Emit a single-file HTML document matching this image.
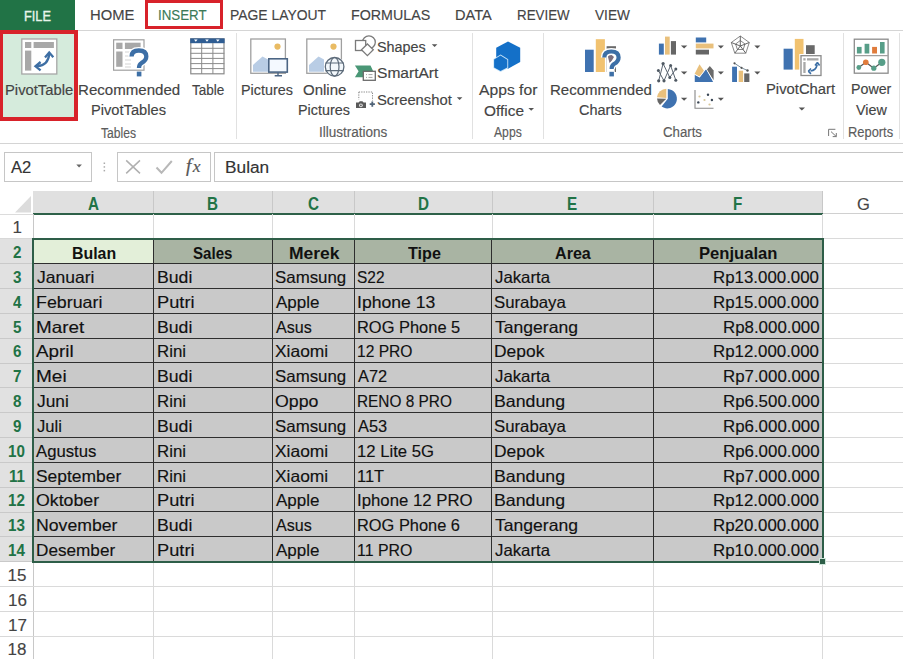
<!DOCTYPE html>
<html><head><meta charset="utf-8"><style>
html,body{margin:0;padding:0;}
body{width:903px;height:659px;overflow:hidden;position:relative;background:#fff;font-family:"Liberation Sans", sans-serif;}
.t{position:absolute;white-space:nowrap;transform-origin:0 0;-webkit-text-stroke:0.15px currentColor;}
.b{-webkit-text-stroke:0;}
.r{position:absolute;box-sizing:content-box;}
</style></head><body>
<div class="r" style="left:0.00px;top:0.00px;width:75.00px;height:30.00px;background:#217346;"></div>
<div class="t" style="left:24.08px;top:7.50px;font-size:15.5px;line-height:15.5px;color:#e8f5ec;font-weight:normal;transform:scaleX(0.8226);-webkit-text-stroke:0.35px #e8f5ec">FILE</div>
<div class="r" style="left:75.00px;top:29.50px;width:828.00px;height:1.00px;background:#d5d5d5;"></div>
<div class="t" style="left:89.61px;top:7.30px;font-size:15px;line-height:15px;color:#444;font-weight:normal;transform:scaleX(0.9864);">HOME</div>
<div class="t" style="left:157.91px;top:7.30px;font-size:15px;line-height:15px;color:#3b7a57;font-weight:normal;transform:scaleX(0.8870);">INSERT</div>
<div class="t" style="left:229.77px;top:7.30px;font-size:15px;line-height:15px;color:#444;font-weight:normal;transform:scaleX(0.9272);">PAGE LAYOUT</div>
<div class="t" style="left:350.65px;top:7.30px;font-size:15px;line-height:15px;color:#444;font-weight:normal;transform:scaleX(0.9500);">FORMULAS</div>
<div class="t" style="left:455.03px;top:7.30px;font-size:15px;line-height:15px;color:#444;font-weight:normal;transform:scaleX(0.9730);">DATA</div>
<div class="t" style="left:517.11px;top:7.30px;font-size:15px;line-height:15px;color:#444;font-weight:normal;transform:scaleX(0.8897);">REVIEW</div>
<div class="t" style="left:595.00px;top:7.30px;font-size:15px;line-height:15px;color:#444;font-weight:normal;transform:scaleX(0.9103);">VIEW</div>
<div class="r" style="left:0.00px;top:142.50px;width:903.00px;height:1.20px;background:#d4d4d4;"></div>
<div class="r" style="left:236.00px;top:33.00px;width:1.00px;height:106.00px;background:#e1e1e1;"></div>
<div class="r" style="left:472.00px;top:33.00px;width:1.00px;height:106.00px;background:#e1e1e1;"></div>
<div class="r" style="left:543.00px;top:33.00px;width:1.00px;height:106.00px;background:#e1e1e1;"></div>
<div class="r" style="left:843.00px;top:33.00px;width:1.00px;height:106.00px;background:#e1e1e1;"></div>
<div class="r" style="left:899.00px;top:33.00px;width:1.00px;height:106.00px;background:#e1e1e1;"></div>
<div class="r" style="left:0.00px;top:30.00px;width:77.00px;height:90.50px;background:#d5ebdc;"></div>
<div class="t" style="left:4.94px;top:82.70px;font-size:14px;line-height:14px;color:#444;font-weight:normal;transform:scaleX(1.0556);">PivotTable</div>
<div class="t" style="left:77.82px;top:82.80px;font-size:14px;line-height:14px;color:#444;font-weight:normal;transform:scaleX(1.0763);">Recommended</div>
<div class="t" style="left:91.25px;top:102.90px;font-size:14px;line-height:14px;color:#444;font-weight:normal;transform:scaleX(1.0471);">PivotTables</div>
<div class="t" style="left:192.00px;top:82.50px;font-size:14px;line-height:14px;color:#444;font-weight:normal;transform:scaleX(0.9667);">Table</div>
<div class="t" style="left:100.60px;top:126.00px;font-size:14px;line-height:14px;color:#5c5c5c;font-weight:normal;transform:scaleX(0.8675);">Tables</div>
<div class="t" style="left:241.27px;top:82.50px;font-size:14px;line-height:14px;color:#444;font-weight:normal;transform:scaleX(1.0265);">Pictures</div>
<div class="t" style="left:302.60px;top:82.50px;font-size:14px;line-height:14px;color:#444;font-weight:normal;transform:scaleX(1.0725);">Online</div>
<div class="t" style="left:297.98px;top:103.20px;font-size:14px;line-height:14px;color:#444;font-weight:normal;transform:scaleX(1.0245);">Pictures</div>
<div class="t" style="left:319.03px;top:125.10px;font-size:14px;line-height:14px;color:#5c5c5c;font-weight:normal;transform:scaleX(0.9657);">Illustrations</div>
<div class="t" style="left:377.37px;top:40.40px;font-size:14px;line-height:14px;color:#444;font-weight:normal;transform:scaleX(1.0261);">Shapes</div>
<div class="t" style="left:377.29px;top:66.40px;font-size:14px;line-height:14px;color:#444;font-weight:normal;transform:scaleX(1.1111);">SmartArt</div>
<div class="t" style="left:377.34px;top:93.10px;font-size:14px;line-height:14px;color:#444;font-weight:normal;transform:scaleX(1.0557);">Screenshot</div>
<div class="t" style="left:479.00px;top:83.40px;font-size:14px;line-height:14px;color:#444;font-weight:normal;transform:scaleX(1.1192);">Apps for</div>
<div class="t" style="left:483.70px;top:103.60px;font-size:14px;line-height:14px;color:#444;font-weight:normal;transform:scaleX(1.1000);">Office</div>
<div class="t" style="left:494.20px;top:125.40px;font-size:14px;line-height:14px;color:#5c5c5c;font-weight:normal;transform:scaleX(0.8688);">Apps</div>
<div class="t" style="left:549.93px;top:83.40px;font-size:14px;line-height:14px;color:#444;font-weight:normal;transform:scaleX(1.0731);">Recommended</div>
<div class="t" style="left:579.17px;top:102.90px;font-size:14px;line-height:14px;color:#444;font-weight:normal;transform:scaleX(1.0350);">Charts</div>
<div class="t" style="left:663.25px;top:124.80px;font-size:14px;line-height:14px;color:#5c5c5c;font-weight:normal;transform:scaleX(0.9450);">Charts</div>
<div class="t" style="left:765.94px;top:82.30px;font-size:14px;line-height:14px;color:#444;font-weight:normal;transform:scaleX(1.0569);">PivotChart</div>
<div class="t" style="left:850.98px;top:82.30px;font-size:14px;line-height:14px;color:#444;font-weight:normal;transform:scaleX(1.0154);">Power</div>
<div class="t" style="left:855.50px;top:102.70px;font-size:14px;line-height:14px;color:#444;font-weight:normal;transform:scaleX(1.0233);">View</div>
<div class="t" style="left:848.28px;top:124.70px;font-size:14px;line-height:14px;color:#5c5c5c;font-weight:normal;transform:scaleX(0.9208);">Reports</div>
<div class="r" style="left:-1px;top:29.8px;width:70.6px;height:82.8px;border:4px solid #d8222a;"></div>
<div class="r" style="left:145.3px;top:-0.3px;width:71.6px;height:23.5px;border:3.8px solid #d8222a;"></div>
<div class="r" style="left:4.4px;top:152.2px;width:85.5px;height:27.8px;border:1px solid #c6c6c6;background:#fff"></div>
<div class="t" style="left:10.60px;top:160.00px;font-size:16px;line-height:16px;color:#333;font-weight:normal;transform:scaleX(1.0368);">A2</div>
<div class="r" style="left:117.4px;top:152.2px;width:91.5px;height:27.8px;border:1px solid #c6c6c6;background:#fff"></div>
<div class="r" style="left:213.5px;top:152.2px;width:700px;height:27.8px;border:1px solid #c6c6c6;background:#fff"></div>
<div class="t" style="left:225.22px;top:160.20px;font-size:16px;line-height:16px;color:#333;font-weight:normal;transform:scaleX(1.0795);">Bulan</div>

<svg class="r" style="left:0;top:0" width="903" height="200" viewBox="0 0 903 200">
<!-- PivotTable -->
<rect x="21.8" y="39" width="35" height="35" fill="#fff" stroke="#a6a6a6" stroke-width="1.3"/>
<rect x="25" y="42" width="6.3" height="6" fill="#a8a8a8"/>
<rect x="33.6" y="42" width="20.3" height="6" fill="#a8a8a8"/>
<rect x="25" y="50.6" width="6.3" height="20" fill="#a8a8a8"/>
<path d="M37,66.2 Q48.5,65.5 49.2,53.5" fill="none" stroke="#3e6fa4" stroke-width="2.3"/>
<path d="M40.6,62 L35.5,66.3 L40.6,70.4" fill="none" stroke="#3e6fa4" stroke-width="2.3"/>
<path d="M45,57.4 L49.2,52.6 L53.3,57.3" fill="none" stroke="#3e6fa4" stroke-width="2.3"/>

<!-- Recommended PivotTables -->
<rect x="113.6" y="39.8" width="30.4" height="30.4" fill="#fff" stroke="#a0a0a0" stroke-width="1.2"/>
<rect x="116.2" y="42.7" width="6.3" height="6.3" fill="#a8a8a8"/>
<rect x="124.9" y="42.7" width="15.7" height="6.3" fill="#a8a8a8"/>
<rect x="116.2" y="51.5" width="6.3" height="15.3" fill="#a8a8a8"/>
<path d="M125,52 h8 M125,56 h6 M125,60 h6 M125,64 h6 M125,67 h6" stroke="#c8c8c8" stroke-width="0.8"/>
<path d="M131.6,56.5 Q131.6,50.5 138.8,50.5 Q146.3,50.5 146.3,56.5 Q146.3,60.5 141.5,63 Q139,64.5 139,68" fill="none" stroke="#fff" stroke-width="7"/>
<path d="M131.6,56.5 Q131.6,50.5 138.8,50.5 Q146.3,50.5 146.3,56.5 Q146.3,60.5 141.5,63 Q139,64.5 139,68" fill="none" stroke="#3d6fa6" stroke-width="4.3"/>
<rect x="136.8" y="71.6" width="4.6" height="4.8" fill="#3d6fa6"/>

<!-- Table -->
<rect x="190.8" y="38.8" width="33.2" height="35" fill="#fff" stroke="#8a8a8a" stroke-width="1.2"/>
<rect x="190.2" y="38.4" width="34.4" height="4.8" fill="#2f5d93"/>
<path d="M194,39.6 h3.6 l-1.8,2.2 z M205.2,39.6 h3.6 l-1.8,2.2 z M216,39.6 h3.6 l-1.8,2.2 z" fill="#fff"/>
<path d="M201.7,43 V74 M212.9,43 V74" stroke="#8a8a8a" stroke-width="1"/>
<path d="M190.5,48.3 H224.3 M190.5,53.3 H224.3 M190.5,58.4 H224.3 M190.5,63.6 H224.3 M190.5,68.6 H224.3" stroke="#8a8a8a" stroke-width="1"/>

<!-- Pictures -->
<rect x="250.8" y="39" width="34.6" height="34.3" fill="#fff" stroke="#a0a0a0" stroke-width="1.3"/>
<circle cx="277.5" cy="46.6" r="3.1" fill="#e9bb63"/>
<path d="M253,71.8 V65 L262.5,56.5 L268,59.5 V71.8 Z" fill="#b9cde5"/>
<rect x="268.8" y="58.8" width="18.5" height="13.3" fill="#f4f9ff" stroke="#4b6584" stroke-width="1.6"/>
<path d="M278,72.5 V75 M274.7,75.8 H282" stroke="#4b6584" stroke-width="1.4"/>

<!-- Online Pictures -->
<rect x="306.8" y="39" width="34.6" height="34.3" fill="#fff" stroke="#a0a0a0" stroke-width="1.3"/>
<circle cx="333.5" cy="46.6" r="3.1" fill="#e9bb63"/>
<path d="M309,71.8 V65 L318.5,56.5 L324,59.5 V71.8 Z" fill="#b9cde5"/>
<circle cx="334.6" cy="66.8" r="10.2" fill="#fff"/>
<circle cx="334.6" cy="66.8" r="9.3" fill="#f3f8fc" stroke="#5d6b7a" stroke-width="1.3"/>
<ellipse cx="334.6" cy="66.8" rx="4.4" ry="9.3" fill="none" stroke="#5d6b7a" stroke-width="1.2"/>
<path d="M325.6,63 H343.6 M325.6,70.6 H343.6" stroke="#5d6b7a" stroke-width="1.2"/>

<!-- Shapes -->
<circle cx="368.9" cy="42.3" r="6.4" fill="#fff" stroke="#7a7a7a" stroke-width="1.3"/>
<rect x="355.5" y="40.5" width="10.2" height="10" fill="#fff" stroke="#7a7a7a" stroke-width="1.3"/>
<path d="M367.4,44 L373.3,49.8 L367.4,55.7 L361.5,49.8 Z" fill="#fff" stroke="#7a7a7a" stroke-width="1.3"/>

<!-- SmartArt -->
<path d="M354.9,65.5 H370.5 L373,70.8 L364,77.2 H354.9 L358.6,71.3 Z" fill="#4a9776"/>
<rect x="363.3" y="71.3" width="12" height="9" fill="#fff" stroke="#6a6a6a" stroke-width="1.3"/>
<path d="M366,74.6 h1 M368.5,74.6 h4 M366,77.4 h1 M368.5,77.4 h4" stroke="#999" stroke-width="0.9"/>

<!-- Screenshot -->
<path d="M358.8,92 H372.5 V100.5 M358.8,92 V99.5" fill="none" stroke="#8a8a8a" stroke-width="1" stroke-dasharray="1.3,1.1"/>
<path d="M356,102.6 h2.6 l1.2,-1.4 h2.6 l1.2,1.4 h2.4 v5.5 h-10 z" fill="#5a5a5a"/>
<circle cx="360.9" cy="105.3" r="1.9" fill="#dcdcdc"/>
<circle cx="360.9" cy="105.3" r="0.9" fill="#5a5a5a"/>
<path d="M372.3,101.6 V106.8 M369.7,104.2 H374.9" stroke="#4f6377" stroke-width="1.8"/>

<!-- Apps for Office -->
<path d="M508,41.5 L520.2,47.8 V62.1 L508,68.8 L496.2,62 V47.8 Z" fill="#1470c8"/>
<path d="M500.6,54.6 L508.2,59.2 V68.1 L500.6,72 L493.3,67.9 V59.1 Z" fill="#c9e4f8"/>
<path d="M500.5,55.6 L507.3,59.7 V67.6 L500.5,71 L494.1,67.4 V59.6 Z" fill="#1470c8"/>

<!-- Recommended Charts -->
<rect x="585" y="49.7" width="8.7" height="22.3" fill="#3f72b0"/>
<rect x="595.8" y="39.2" width="9.1" height="32.8" fill="#f1c270"/>
<rect x="606.6" y="46.2" width="9.4" height="25.8" fill="#696969"/>
<rect x="606.6" y="49" width="9.4" height="23" fill="#fff"/><path d="M607.5,55 Q611,53.5 614,57 Q612,61 609.5,63 Z" fill="#7d6f7d"/><rect x="614.6" y="66" width="1.4" height="6" fill="#696969"/><path d="M604.3,57.5 Q604.3,51.5 611.3,51.5 Q618.6,51.5 618.6,57.5 Q618.6,61.5 614,64 Q611.6,65.5 611.6,69" fill="none" stroke="#fff" stroke-width="7"/>
<path d="M604.3,57.5 Q604.3,51.5 611.3,51.5 Q618.6,51.5 618.6,57.5 Q618.6,61.5 614,64 Q611.6,65.5 611.6,69" fill="none" stroke="#3d6fa6" stroke-width="4.2"/>
<rect x="609.4" y="71.8" width="4.5" height="4.6" fill="#fff" stroke="#fff" stroke-width="1.2"/>
<rect x="609.4" y="71.8" width="4.5" height="4.6" fill="#3d6fa6"/>

<!-- Column chart -->
<rect x="658.9" y="43.6" width="4.9" height="11" fill="#3f72b0"/>
<rect x="665" y="36.6" width="4.7" height="18" fill="#e9c07c"/>
<rect x="670.9" y="41.1" width="5.1" height="13.5" fill="#666"/>
<!-- Bar chart -->
<rect x="695.8" y="37.5" width="10.4" height="4.9" fill="#3f72b0"/>
<rect x="695.8" y="43.6" width="17.7" height="4.8" fill="#e9c07c"/>
<rect x="695.8" y="49.7" width="13.2" height="4.8" fill="#666"/>
<!-- Radar -->
<g fill="none" stroke="#7a7a7a" stroke-width="0.9">
<path d="M740.3,36 L749.3,42.5 L745.8,53.2 L734.8,53.2 L731.3,42.5 Z"/>
<path d="M740.3,40.5 L745,44 L743.2,49.5 L737.4,49.5 L735.6,44 Z"/>
<path d="M740.3,36 V46 M749.3,42.5 L740.3,46 M745.8,53.2 L740.3,46 M734.8,53.2 L740.3,46 M731.3,42.5 L740.3,46" stroke="#555"/>
</g>
<!-- XY lines -->
<g stroke="#5a6470" stroke-width="1" fill="none">
<path d="M658.7,80.8 L663.1,63.6 L669.8,77.5 L675.8,69.1"/>
<path d="M658.4,70.6 L664,80.8 L670.6,65.5 L675.8,80.2"/>
</g>
<g fill="#4f5963">
<circle cx="663.1" cy="63.6" r="1.6"/><circle cx="670.6" cy="65.5" r="1.5"/><circle cx="658.4" cy="70.6" r="1.5"/><circle cx="675.8" cy="69.1" r="1.5"/>
<circle cx="658.7" cy="80.8" r="1.6"/><circle cx="664" cy="80.8" r="1.6"/><circle cx="669.8" cy="77.5" r="1.5"/><circle cx="675.8" cy="80.2" r="1.5"/>
</g>
<!-- Area chart -->
<path d="M694.8,73.5 L699.5,64.2 L704.5,71.5 L699.5,76.5 L694.8,74.5 Z" fill="#e9c07c"/>
<path d="M709.8,66 L713.6,70.5 V80 L706.5,70 Z" fill="#6a6a6a"/>
<path d="M694.8,82 V74.6 L699.6,77.3 L706,68.8 L713.6,82 Z" fill="#3f72b0" stroke="#fff" stroke-width="1.1" stroke-linejoin="round"/>
<path d="M694.3,82 H714.2" stroke="#fff" stroke-width="1.2"/>
<path d="M694.8,82 V75 L699.6,77.8 L706,69.5 L713.1,82 Z" fill="#3f72b0"/>
<!-- Combo -->
<rect x="732.1" y="66.7" width="4.9" height="15.3" fill="#3f72b0"/>
<rect x="738.7" y="70.7" width="4.4" height="11.3" fill="#e9c07c"/>
<rect x="744.2" y="73.4" width="5.2" height="8.6" fill="#666"/>
<path d="M734.5,63.3 L741.5,67.8 L747.5,70.5" stroke="#6a7f8c" stroke-width="0.9" fill="none"/>
<circle cx="734.5" cy="63.3" r="1.1" fill="#555"/><circle cx="741.5" cy="67.8" r="1.1" fill="#555"/><circle cx="747.5" cy="70.5" r="1.2" fill="#555"/>
<!-- Pie -->
<path d="M667.8,98.8 L667.8,89 A9.7,9.7 0 1 1 661.6,106.6 Z" fill="#3f72b0"/>
<path d="M666.3,98 L666.3,88.7 A9.4,9.4 0 0 0 657,97.2 Z" fill="#e9c07c"/>
<path d="M666.3,98.8 L657,98.5 A9.4,9.4 0 0 0 660,105 Z" fill="#666"/>
<!-- Scatter -->
<path d="M695,89.9 V108.2 H713.5" fill="none" stroke="#888" stroke-width="1.1"/>
<g fill="#3a4654"><circle cx="708" cy="94.7" r="1.2"/><circle cx="698.3" cy="102.4" r="1.2"/><circle cx="711.9" cy="100" r="1.2"/></g>
<g fill="#d9c79a"><circle cx="699.5" cy="96.5" r="1.1"/><circle cx="704.5" cy="100" r="1.1"/><circle cx="709.5" cy="104.5" r="1.1"/></g>

<!-- dropdown arrows -->
<g fill="#555">
<path d="M680.9,45.4 h6.4 l-3.2,3 z"/><path d="M717.8,45.4 h6.1 l-3.05,3 z"/><path d="M754.3,45.4 h6.1 l-3.05,3 z"/>
<path d="M680.9,71.6 h6.4 l-3.2,3 z"/><path d="M717.8,71.6 h6.1 l-3.05,3 z"/><path d="M754.3,71.6 h6.1 l-3.05,3 z"/>
<path d="M680.9,97.8 h6.4 l-3.2,3 z"/><path d="M717.8,97.8 h6.1 l-3.05,3 z"/>
<path d="M431.8,44.3 h5.6 l-2.8,2.8 z"/><path d="M456.8,97.2 h5.6 l-2.8,2.8 z"/>
<path d="M528.4,108 h5.6 l-2.8,2.8 z"/>
<path d="M798.7,107.6 h6.3 l-3.15,3 z"/>
</g>
<!-- dialog launcher -->
<path d="M828.6,136 V129.3 H835.4" fill="none" stroke="#777" stroke-width="1"/>
<path d="M831,131.6 L836.3,136.6 M836.3,133 V136.6 H832.7" fill="none" stroke="#777" stroke-width="1"/>

<!-- PivotChart -->
<rect x="783.6" y="48.7" width="9.1" height="20.9" fill="#3f72b0"/>
<rect x="794.8" y="38.9" width="8.7" height="30.7" fill="#f1c270"/>
<rect x="806" y="45.2" width="8.7" height="10" fill="#696969"/>
<rect x="800.3" y="55" width="21.3" height="21.2" fill="#fff" stroke="#fff" stroke-width="2"/>
<rect x="801" y="55.7" width="20" height="19.8" fill="#fff" stroke="#8a8a8a" stroke-width="1.3"/>
<rect x="803.3" y="58.2" width="2.3" height="2.3" fill="#a8a8a8"/>
<rect x="807" y="58.2" width="11.5" height="2.3" fill="#a8a8a8"/>
<rect x="803.3" y="62" width="2.3" height="11" fill="#a8a8a8"/>
<path d="M810.5,71 Q816,70.5 817.2,64.5" fill="none" stroke="#3b6ea5" stroke-width="1.6"/>
<path d="M808.3,71.2 L811,68.5 M808.3,71.2 L811,73.8 M817.4,62.6 L815,65.4 M817.4,62.6 L819.6,65.4" fill="none" stroke="#3b6ea5" stroke-width="1.6"/>

<!-- Power View -->
<rect x="854.3" y="39.2" width="33.8" height="34" fill="#fff" stroke="#8c8c8c" stroke-width="1.3"/>
<path d="M854.3,55.6 H888.1" stroke="#a0a0a0" stroke-width="1.1"/>
<rect x="856.9" y="46.9" width="4.7" height="6.6" fill="#579e88"/>
<rect x="864.6" y="43.8" width="4.7" height="9.7" fill="#579e88"/>
<rect x="872.1" y="46.9" width="4.9" height="6.6" fill="#e07c3c"/>
<rect x="880" y="42" width="4.6" height="11.5" fill="#579e88"/>
<path d="M858.8,67.5 L865.8,62.3 L873.8,68.2 L881.8,62.3" fill="none" stroke="#555" stroke-width="1.2"/>
<circle cx="858.8" cy="67.5" r="2.4" fill="#579e88"/>
<circle cx="865.8" cy="62.3" r="2.8" fill="#e07c3c"/>
<circle cx="873.8" cy="68.2" r="2.6" fill="#579e88"/>
<circle cx="881.8" cy="62.3" r="3.6" fill="#579e88"/>

<!-- Formula bar icons -->
<path d="M76.3,164.4 h5.6 l-2.8,3.2 z" fill="#666"/>
<g fill="#aaa"><rect x="103.6" y="162.5" width="1.5" height="1.5"/><rect x="103.6" y="166.2" width="1.5" height="1.5"/><rect x="103.6" y="169.9" width="1.5" height="1.5"/></g>
<path d="M126.2,160.4 L140,173.4 M140,160.4 L126.2,173.4" stroke="#b0b0b0" stroke-width="1.5"/>
<path d="M156.5,167.5 L161.5,172.8 L171.8,161" fill="none" stroke="#b8b8b8" stroke-width="2"/>
</svg>
<div class="t" style="left:186px;top:155.5px;font-family:'Liberation Serif',serif;font-style:italic;font-size:19px;line-height:20px;color:#555;-webkit-text-stroke:0.2px #555;">f<span style="font-size:17.5px;margin-left:1.5px">x</span></div>

<div class="r" style="left:33.20px;top:190.60px;width:789.40px;height:23.50px;background:#e0e0e0;"></div>
<div class="r" style="left:152.70px;top:190.60px;width:1.00px;height:23.50px;background:#c8c8c8;"></div>
<div class="r" style="left:272.30px;top:190.60px;width:1.00px;height:23.50px;background:#c8c8c8;"></div>
<div class="r" style="left:354.20px;top:190.60px;width:1.00px;height:23.50px;background:#c8c8c8;"></div>
<div class="r" style="left:491.50px;top:190.60px;width:1.00px;height:23.50px;background:#c8c8c8;"></div>
<div class="r" style="left:652.70px;top:190.60px;width:1.00px;height:23.50px;background:#c8c8c8;"></div>
<div class="r" style="left:822.10px;top:190.60px;width:1.00px;height:23.50px;background:#c8c8c8;"></div>
<svg class="r" style="left:0;top:190.6px" width="33" height="25"><polygon points="31,5 31,21.5 15,21.5" fill="#dcdcdc"/></svg>
<div class="r" style="left:822.60px;top:213.10px;width:80.40px;height:1.00px;background:#d0d0d0;"></div>
<div class="t b" style="left:87.98px;top:195.80px;font-size:17.5px;line-height:17.5px;color:#217346;font-weight:bold;transform:scaleX(0.8700);">A</div>
<div class="t b" style="left:207.34px;top:195.80px;font-size:17.5px;line-height:17.5px;color:#217346;font-weight:bold;transform:scaleX(0.8700);">B</div>
<div class="t b" style="left:308.10px;top:195.80px;font-size:17.5px;line-height:17.5px;color:#217346;font-weight:bold;transform:scaleX(0.8700);">C</div>
<div class="t b" style="left:417.70px;top:195.80px;font-size:17.5px;line-height:17.5px;color:#217346;font-weight:bold;transform:scaleX(0.8700);">D</div>
<div class="t b" style="left:567.38px;top:195.80px;font-size:17.5px;line-height:17.5px;color:#217346;font-weight:bold;transform:scaleX(0.8700);">E</div>
<div class="t b" style="left:733.12px;top:195.80px;font-size:17.5px;line-height:17.5px;color:#217346;font-weight:bold;transform:scaleX(0.8700);">F</div>
<div class="t" style="left:856.98px;top:195.50px;font-size:17px;line-height:17px;color:#444;font-weight:normal;transform:scaleX(0.9727);">G</div>
<div class="r" style="left:33.20px;top:213.10px;width:789.40px;height:2.00px;background:#2e6149;"></div>
<div class="r" style="left:0.00px;top:238.93px;width:33.20px;height:322.79px;background:#e1e1e1;"></div>
<div class="r" style="left:0.00px;top:238.43px;width:33.20px;height:1.00px;background:#d8d8d8;"></div>
<div class="r" style="left:0.00px;top:263.26px;width:33.20px;height:1.00px;background:#c9c9c9;"></div>
<div class="r" style="left:0.00px;top:288.09px;width:33.20px;height:1.00px;background:#c9c9c9;"></div>
<div class="r" style="left:0.00px;top:312.92px;width:33.20px;height:1.00px;background:#c9c9c9;"></div>
<div class="r" style="left:0.00px;top:337.75px;width:33.20px;height:1.00px;background:#c9c9c9;"></div>
<div class="r" style="left:0.00px;top:362.58px;width:33.20px;height:1.00px;background:#c9c9c9;"></div>
<div class="r" style="left:0.00px;top:387.41px;width:33.20px;height:1.00px;background:#c9c9c9;"></div>
<div class="r" style="left:0.00px;top:412.24px;width:33.20px;height:1.00px;background:#c9c9c9;"></div>
<div class="r" style="left:0.00px;top:437.07px;width:33.20px;height:1.00px;background:#c9c9c9;"></div>
<div class="r" style="left:0.00px;top:461.90px;width:33.20px;height:1.00px;background:#c9c9c9;"></div>
<div class="r" style="left:0.00px;top:486.73px;width:33.20px;height:1.00px;background:#c9c9c9;"></div>
<div class="r" style="left:0.00px;top:511.56px;width:33.20px;height:1.00px;background:#c9c9c9;"></div>
<div class="r" style="left:0.00px;top:536.39px;width:33.20px;height:1.00px;background:#c9c9c9;"></div>
<div class="r" style="left:0.00px;top:561.22px;width:33.20px;height:1.00px;background:#c9c9c9;"></div>
<div class="r" style="left:0.00px;top:586.05px;width:33.20px;height:1.00px;background:#d8d8d8;"></div>
<div class="r" style="left:0.00px;top:610.88px;width:33.20px;height:1.00px;background:#d8d8d8;"></div>
<div class="r" style="left:0.00px;top:635.71px;width:33.20px;height:1.00px;background:#d8d8d8;"></div>
<div class="r" style="left:0.00px;top:660.54px;width:33.20px;height:1.00px;background:#d8d8d8;"></div>
<div class="t" style="left:12.45px;top:219.23px;font-size:17px;line-height:17px;color:#444;font-weight:normal;transform:scaleX(1.0000);">1</div>
<div class="t b" style="left:13.06px;top:244.06px;font-size:16.5px;line-height:16.5px;color:#217346;font-weight:bold;transform:scaleX(0.9200);">2</div>
<div class="t b" style="left:13.06px;top:268.89px;font-size:16.5px;line-height:16.5px;color:#217346;font-weight:bold;transform:scaleX(0.9200);">3</div>
<div class="t b" style="left:13.06px;top:293.72px;font-size:16.5px;line-height:16.5px;color:#217346;font-weight:bold;transform:scaleX(0.9200);">4</div>
<div class="t b" style="left:13.06px;top:318.55px;font-size:16.5px;line-height:16.5px;color:#217346;font-weight:bold;transform:scaleX(0.9200);">5</div>
<div class="t b" style="left:13.06px;top:343.38px;font-size:16.5px;line-height:16.5px;color:#217346;font-weight:bold;transform:scaleX(0.9200);">6</div>
<div class="t b" style="left:12.60px;top:368.21px;font-size:16.5px;line-height:16.5px;color:#217346;font-weight:bold;transform:scaleX(0.9200);">7</div>
<div class="t b" style="left:13.06px;top:393.04px;font-size:16.5px;line-height:16.5px;color:#217346;font-weight:bold;transform:scaleX(0.9200);">8</div>
<div class="t b" style="left:13.06px;top:417.87px;font-size:16.5px;line-height:16.5px;color:#217346;font-weight:bold;transform:scaleX(0.9200);">9</div>
<div class="t b" style="left:8.46px;top:442.70px;font-size:16.5px;line-height:16.5px;color:#217346;font-weight:bold;transform:scaleX(0.9200);">10</div>
<div class="t b" style="left:8.92px;top:467.53px;font-size:16.5px;line-height:16.5px;color:#217346;font-weight:bold;transform:scaleX(0.9200);">11</div>
<div class="t b" style="left:8.46px;top:492.36px;font-size:16.5px;line-height:16.5px;color:#217346;font-weight:bold;transform:scaleX(0.9200);">12</div>
<div class="t b" style="left:8.46px;top:517.19px;font-size:16.5px;line-height:16.5px;color:#217346;font-weight:bold;transform:scaleX(0.9200);">13</div>
<div class="t b" style="left:8.00px;top:542.02px;font-size:16.5px;line-height:16.5px;color:#217346;font-weight:bold;transform:scaleX(0.9200);">14</div>
<div class="t" style="left:7.45px;top:566.85px;font-size:17px;line-height:17px;color:#444;font-weight:normal;transform:scaleX(1.0000);">15</div>
<div class="t" style="left:7.95px;top:591.68px;font-size:17px;line-height:17px;color:#444;font-weight:normal;transform:scaleX(1.0000);">16</div>
<div class="t" style="left:7.95px;top:616.51px;font-size:17px;line-height:17px;color:#444;font-weight:normal;transform:scaleX(1.0000);">17</div>
<div class="t" style="left:7.45px;top:641.34px;font-size:17px;line-height:17px;color:#444;font-weight:normal;transform:scaleX(1.0000);">18</div>
<div class="r" style="left:32.70px;top:214.10px;width:1.00px;height:444.90px;background:#c8c8c8;"></div>
<div class="r" style="left:0.00px;top:213.60px;width:33.00px;height:1.00px;background:#dcdcdc;"></div>
<div class="r" style="left:33.20px;top:238.43px;width:869.80px;height:1.00px;background:#dadada;"></div>
<div class="r" style="left:33.20px;top:263.26px;width:869.80px;height:1.00px;background:#dadada;"></div>
<div class="r" style="left:33.20px;top:288.09px;width:869.80px;height:1.00px;background:#dadada;"></div>
<div class="r" style="left:33.20px;top:312.92px;width:869.80px;height:1.00px;background:#dadada;"></div>
<div class="r" style="left:33.20px;top:337.75px;width:869.80px;height:1.00px;background:#dadada;"></div>
<div class="r" style="left:33.20px;top:362.58px;width:869.80px;height:1.00px;background:#dadada;"></div>
<div class="r" style="left:33.20px;top:387.41px;width:869.80px;height:1.00px;background:#dadada;"></div>
<div class="r" style="left:33.20px;top:412.24px;width:869.80px;height:1.00px;background:#dadada;"></div>
<div class="r" style="left:33.20px;top:437.07px;width:869.80px;height:1.00px;background:#dadada;"></div>
<div class="r" style="left:33.20px;top:461.90px;width:869.80px;height:1.00px;background:#dadada;"></div>
<div class="r" style="left:33.20px;top:486.73px;width:869.80px;height:1.00px;background:#dadada;"></div>
<div class="r" style="left:33.20px;top:511.56px;width:869.80px;height:1.00px;background:#dadada;"></div>
<div class="r" style="left:33.20px;top:536.39px;width:869.80px;height:1.00px;background:#dadada;"></div>
<div class="r" style="left:33.20px;top:561.22px;width:869.80px;height:1.00px;background:#dadada;"></div>
<div class="r" style="left:33.20px;top:586.05px;width:869.80px;height:1.00px;background:#dadada;"></div>
<div class="r" style="left:33.20px;top:610.88px;width:869.80px;height:1.00px;background:#dadada;"></div>
<div class="r" style="left:33.20px;top:635.71px;width:869.80px;height:1.00px;background:#dadada;"></div>
<div class="r" style="left:33.20px;top:660.54px;width:869.80px;height:1.00px;background:#dadada;"></div>
<div class="r" style="left:152.70px;top:214.10px;width:1.00px;height:444.90px;background:#dadada;"></div>
<div class="r" style="left:272.30px;top:214.10px;width:1.00px;height:444.90px;background:#dadada;"></div>
<div class="r" style="left:354.20px;top:214.10px;width:1.00px;height:444.90px;background:#dadada;"></div>
<div class="r" style="left:491.50px;top:214.10px;width:1.00px;height:444.90px;background:#dadada;"></div>
<div class="r" style="left:652.70px;top:214.10px;width:1.00px;height:444.90px;background:#dadada;"></div>
<div class="r" style="left:822.10px;top:214.10px;width:1.00px;height:444.90px;background:#dadada;"></div>
<div class="r" style="left:33.20px;top:238.93px;width:120.00px;height:24.83px;background:#e3efd9;"></div>
<div class="r" style="left:153.20px;top:238.93px;width:669.40px;height:24.83px;background:#a9b4a3;"></div>
<div class="r" style="left:33.20px;top:263.76px;width:789.40px;height:297.96px;background:#c9c9c9;"></div>
<div class="r" style="left:33.20px;top:263.00px;width:789.40px;height:1.25px;background:#2e2e2e;"></div>
<div class="r" style="left:33.20px;top:288.00px;width:789.40px;height:1.25px;background:#2e2e2e;"></div>
<div class="r" style="left:33.20px;top:313.00px;width:789.40px;height:1.25px;background:#2e2e2e;"></div>
<div class="r" style="left:33.20px;top:338.00px;width:789.40px;height:1.25px;background:#2e2e2e;"></div>
<div class="r" style="left:33.20px;top:362.00px;width:789.40px;height:1.25px;background:#2e2e2e;"></div>
<div class="r" style="left:33.20px;top:387.00px;width:789.40px;height:1.25px;background:#2e2e2e;"></div>
<div class="r" style="left:33.20px;top:412.00px;width:789.40px;height:1.25px;background:#2e2e2e;"></div>
<div class="r" style="left:33.20px;top:437.00px;width:789.40px;height:1.25px;background:#2e2e2e;"></div>
<div class="r" style="left:33.20px;top:462.00px;width:789.40px;height:1.25px;background:#2e2e2e;"></div>
<div class="r" style="left:33.20px;top:487.00px;width:789.40px;height:1.25px;background:#2e2e2e;"></div>
<div class="r" style="left:33.20px;top:511.00px;width:789.40px;height:1.25px;background:#2e2e2e;"></div>
<div class="r" style="left:33.20px;top:536.00px;width:789.40px;height:1.25px;background:#2e2e2e;"></div>
<div class="r" style="left:33.20px;top:561.00px;width:789.40px;height:1.25px;background:#2e2e2e;"></div>
<div class="r" style="left:153.00px;top:238.93px;width:1.25px;height:322.79px;background:#2e2e2e;"></div>
<div class="r" style="left:272.00px;top:238.93px;width:1.25px;height:322.79px;background:#2e2e2e;"></div>
<div class="r" style="left:354.00px;top:238.93px;width:1.25px;height:322.79px;background:#2e2e2e;"></div>
<div class="r" style="left:491.00px;top:238.93px;width:1.25px;height:322.79px;background:#2e2e2e;"></div>
<div class="r" style="left:653.00px;top:238.93px;width:1.25px;height:322.79px;background:#2e2e2e;"></div>
<div class="t b" style="left:72.04px;top:244.56px;font-size:16.5px;line-height:16.5px;color:#111;font-weight:bold;transform:scaleX(0.9636);">Bulan</div>
<div class="t b" style="left:193.09px;top:244.56px;font-size:16.5px;line-height:16.5px;color:#111;font-weight:bold;transform:scaleX(0.9143);">Sales</div>
<div class="t b" style="left:288.54px;top:244.56px;font-size:16.5px;line-height:16.5px;color:#111;font-weight:bold;transform:scaleX(1.0596);">Merek</div>
<div class="t b" style="left:407.60px;top:244.56px;font-size:16.5px;line-height:16.5px;color:#111;font-weight:bold;transform:scaleX(0.9788);">Tipe</div>
<div class="t b" style="left:554.90px;top:244.56px;font-size:16.5px;line-height:16.5px;color:#111;font-weight:bold;transform:scaleX(0.9757);">Area</div>
<div class="t b" style="left:698.99px;top:244.56px;font-size:16.5px;line-height:16.5px;color:#111;font-weight:bold;transform:scaleX(1.0066);">Penjualan</div>
<div class="t" style="left:37.20px;top:268.99px;font-size:16.5px;line-height:16.5px;color:#111;font-weight:normal;transform:scaleX(1.0604);">Januari</div>
<div class="t" style="left:156.73px;top:268.99px;font-size:16.5px;line-height:16.5px;color:#111;font-weight:normal;transform:scaleX(1.0710);">Budi</div>
<div class="t" style="left:275.48px;top:268.99px;font-size:16.5px;line-height:16.5px;color:#111;font-weight:normal;transform:scaleX(1.0221);">Samsung</div>
<div class="t" style="left:357.36px;top:268.99px;font-size:16.5px;line-height:16.5px;color:#111;font-weight:normal;transform:scaleX(0.9357);">S22</div>
<div class="t" style="left:495.20px;top:268.99px;font-size:16.5px;line-height:16.5px;color:#111;font-weight:normal;transform:scaleX(1.0167);">Jakarta</div>
<div class="t" style="left:713.43px;top:268.99px;font-size:16.5px;line-height:16.5px;color:#111;font-weight:normal;transform:scaleX(1.0220);">Rp13.000.000</div>
<div class="t" style="left:36.12px;top:293.82px;font-size:16.5px;line-height:16.5px;color:#111;font-weight:normal;transform:scaleX(1.0800);">Februari</div>
<div class="t" style="left:156.69px;top:293.82px;font-size:16.5px;line-height:16.5px;color:#111;font-weight:normal;transform:scaleX(1.1062);">Putri</div>
<div class="t" style="left:275.70px;top:293.82px;font-size:16.5px;line-height:16.5px;color:#111;font-weight:normal;transform:scaleX(1.0310);">Apple</div>
<div class="t" style="left:357.23px;top:293.82px;font-size:16.5px;line-height:16.5px;color:#111;font-weight:normal;transform:scaleX(1.0667);">Iphone 13</div>
<div class="t" style="left:494.18px;top:293.82px;font-size:16.5px;line-height:16.5px;color:#111;font-weight:normal;transform:scaleX(1.0171);">Surabaya</div>
<div class="t" style="left:713.43px;top:293.82px;font-size:16.5px;line-height:16.5px;color:#111;font-weight:normal;transform:scaleX(1.0220);">Rp15.000.000</div>
<div class="t" style="left:36.06px;top:318.65px;font-size:16.5px;line-height:16.5px;color:#111;font-weight:normal;transform:scaleX(1.1415);">Maret</div>
<div class="t" style="left:156.73px;top:318.65px;font-size:16.5px;line-height:16.5px;color:#111;font-weight:normal;transform:scaleX(1.0710);">Budi</div>
<div class="t" style="left:275.70px;top:318.65px;font-size:16.5px;line-height:16.5px;color:#111;font-weight:normal;transform:scaleX(0.9750);">Asus</div>
<div class="t" style="left:357.30px;top:318.65px;font-size:16.5px;line-height:16.5px;color:#111;font-weight:normal;transform:scaleX(0.9961);">ROG Phone 5</div>
<div class="t" style="left:495.20px;top:318.65px;font-size:16.5px;line-height:16.5px;color:#111;font-weight:normal;transform:scaleX(1.0636);">Tangerang</div>
<div class="t" style="left:722.63px;top:318.65px;font-size:16.5px;line-height:16.5px;color:#111;font-weight:normal;transform:scaleX(1.0220);">Rp8.000.000</div>
<div class="t" style="left:36.40px;top:343.48px;font-size:16.5px;line-height:16.5px;color:#111;font-weight:normal;transform:scaleX(1.1438);">April</div>
<div class="t" style="left:156.78px;top:343.48px;font-size:16.5px;line-height:16.5px;color:#111;font-weight:normal;transform:scaleX(1.0222);">Rini</div>
<div class="t" style="left:275.44px;top:343.48px;font-size:16.5px;line-height:16.5px;color:#111;font-weight:normal;transform:scaleX(1.0551);">Xiaomi</div>
<div class="t" style="left:357.35px;top:343.48px;font-size:16.5px;line-height:16.5px;color:#111;font-weight:normal;transform:scaleX(0.9456);">12 PRO</div>
<div class="t" style="left:494.14px;top:343.48px;font-size:16.5px;line-height:16.5px;color:#111;font-weight:normal;transform:scaleX(1.0553);">Depok</div>
<div class="t" style="left:713.43px;top:343.48px;font-size:16.5px;line-height:16.5px;color:#111;font-weight:normal;transform:scaleX(1.0220);">Rp12.000.000</div>
<div class="t" style="left:36.05px;top:368.31px;font-size:16.5px;line-height:16.5px;color:#111;font-weight:normal;transform:scaleX(1.1520);">Mei</div>
<div class="t" style="left:156.73px;top:368.31px;font-size:16.5px;line-height:16.5px;color:#111;font-weight:normal;transform:scaleX(1.0710);">Budi</div>
<div class="t" style="left:275.48px;top:368.31px;font-size:16.5px;line-height:16.5px;color:#111;font-weight:normal;transform:scaleX(1.0221);">Samsung</div>
<div class="t" style="left:357.50px;top:368.31px;font-size:16.5px;line-height:16.5px;color:#111;font-weight:normal;transform:scaleX(0.9931);">A72</div>
<div class="t" style="left:495.20px;top:368.31px;font-size:16.5px;line-height:16.5px;color:#111;font-weight:normal;transform:scaleX(1.0167);">Jakarta</div>
<div class="t" style="left:722.63px;top:368.31px;font-size:16.5px;line-height:16.5px;color:#111;font-weight:normal;transform:scaleX(1.0220);">Rp7.000.000</div>
<div class="t" style="left:37.20px;top:393.14px;font-size:16.5px;line-height:16.5px;color:#111;font-weight:normal;transform:scaleX(1.0517);">Juni</div>
<div class="t" style="left:156.78px;top:393.14px;font-size:16.5px;line-height:16.5px;color:#111;font-weight:normal;transform:scaleX(1.0222);">Rini</div>
<div class="t" style="left:275.42px;top:393.14px;font-size:16.5px;line-height:16.5px;color:#111;font-weight:normal;transform:scaleX(1.0769);">Oppo</div>
<div class="t" style="left:357.37px;top:393.14px;font-size:16.5px;line-height:16.5px;color:#111;font-weight:normal;transform:scaleX(0.9320);">RENO 8 PRO</div>
<div class="t" style="left:494.12px;top:393.14px;font-size:16.5px;line-height:16.5px;color:#111;font-weight:normal;transform:scaleX(1.0766);">Bandung</div>
<div class="t" style="left:722.63px;top:393.14px;font-size:16.5px;line-height:16.5px;color:#111;font-weight:normal;transform:scaleX(1.0220);">Rp6.500.000</div>
<div class="t" style="left:37.20px;top:417.97px;font-size:16.5px;line-height:16.5px;color:#111;font-weight:normal;transform:scaleX(1.0042);">Juli</div>
<div class="t" style="left:156.73px;top:417.97px;font-size:16.5px;line-height:16.5px;color:#111;font-weight:normal;transform:scaleX(1.0710);">Budi</div>
<div class="t" style="left:275.48px;top:417.97px;font-size:16.5px;line-height:16.5px;color:#111;font-weight:normal;transform:scaleX(1.0221);">Samsung</div>
<div class="t" style="left:357.50px;top:417.97px;font-size:16.5px;line-height:16.5px;color:#111;font-weight:normal;transform:scaleX(0.9931);">A53</div>
<div class="t" style="left:494.18px;top:417.97px;font-size:16.5px;line-height:16.5px;color:#111;font-weight:normal;transform:scaleX(1.0171);">Surabaya</div>
<div class="t" style="left:722.63px;top:417.97px;font-size:16.5px;line-height:16.5px;color:#111;font-weight:normal;transform:scaleX(1.0220);">Rp6.000.000</div>
<div class="t" style="left:36.40px;top:442.80px;font-size:16.5px;line-height:16.5px;color:#111;font-weight:normal;transform:scaleX(1.0136);">Agustus</div>
<div class="t" style="left:156.78px;top:442.80px;font-size:16.5px;line-height:16.5px;color:#111;font-weight:normal;transform:scaleX(1.0222);">Rini</div>
<div class="t" style="left:275.44px;top:442.80px;font-size:16.5px;line-height:16.5px;color:#111;font-weight:normal;transform:scaleX(1.0551);">Xiaomi</div>
<div class="t" style="left:357.29px;top:442.80px;font-size:16.5px;line-height:16.5px;color:#111;font-weight:normal;transform:scaleX(1.0108);">12 Lite 5G</div>
<div class="t" style="left:494.14px;top:442.80px;font-size:16.5px;line-height:16.5px;color:#111;font-weight:normal;transform:scaleX(1.0553);">Depok</div>
<div class="t" style="left:722.63px;top:442.80px;font-size:16.5px;line-height:16.5px;color:#111;font-weight:normal;transform:scaleX(1.0220);">Rp6.000.000</div>
<div class="t" style="left:36.14px;top:467.63px;font-size:16.5px;line-height:16.5px;color:#111;font-weight:normal;transform:scaleX(1.0562);">September</div>
<div class="t" style="left:156.78px;top:467.63px;font-size:16.5px;line-height:16.5px;color:#111;font-weight:normal;transform:scaleX(1.0222);">Rini</div>
<div class="t" style="left:275.44px;top:467.63px;font-size:16.5px;line-height:16.5px;color:#111;font-weight:normal;transform:scaleX(1.0551);">Xiaomi</div>
<div class="t" style="left:357.30px;top:467.63px;font-size:16.5px;line-height:16.5px;color:#111;font-weight:normal;transform:scaleX(0.9962);">11T</div>
<div class="t" style="left:494.12px;top:467.63px;font-size:16.5px;line-height:16.5px;color:#111;font-weight:normal;transform:scaleX(1.0766);">Bandung</div>
<div class="t" style="left:722.63px;top:467.63px;font-size:16.5px;line-height:16.5px;color:#111;font-weight:normal;transform:scaleX(1.0220);">Rp7.000.000</div>
<div class="t" style="left:36.12px;top:492.46px;font-size:16.5px;line-height:16.5px;color:#111;font-weight:normal;transform:scaleX(1.0759);">Oktober</div>
<div class="t" style="left:156.69px;top:492.46px;font-size:16.5px;line-height:16.5px;color:#111;font-weight:normal;transform:scaleX(1.1062);">Putri</div>
<div class="t" style="left:275.70px;top:492.46px;font-size:16.5px;line-height:16.5px;color:#111;font-weight:normal;transform:scaleX(1.0310);">Apple</div>
<div class="t" style="left:357.28px;top:492.46px;font-size:16.5px;line-height:16.5px;color:#111;font-weight:normal;transform:scaleX(1.0161);">Iphone 12 PRO</div>
<div class="t" style="left:494.12px;top:492.46px;font-size:16.5px;line-height:16.5px;color:#111;font-weight:normal;transform:scaleX(1.0766);">Bandung</div>
<div class="t" style="left:713.43px;top:492.46px;font-size:16.5px;line-height:16.5px;color:#111;font-weight:normal;transform:scaleX(1.0220);">Rp12.000.000</div>
<div class="t" style="left:36.13px;top:517.29px;font-size:16.5px;line-height:16.5px;color:#111;font-weight:normal;transform:scaleX(1.0707);">November</div>
<div class="t" style="left:156.73px;top:517.29px;font-size:16.5px;line-height:16.5px;color:#111;font-weight:normal;transform:scaleX(1.0710);">Budi</div>
<div class="t" style="left:275.70px;top:517.29px;font-size:16.5px;line-height:16.5px;color:#111;font-weight:normal;transform:scaleX(0.9750);">Asus</div>
<div class="t" style="left:357.31px;top:517.29px;font-size:16.5px;line-height:16.5px;color:#111;font-weight:normal;transform:scaleX(0.9931);">ROG Phone 6</div>
<div class="t" style="left:495.20px;top:517.29px;font-size:16.5px;line-height:16.5px;color:#111;font-weight:normal;transform:scaleX(1.0636);">Tangerang</div>
<div class="t" style="left:713.43px;top:517.29px;font-size:16.5px;line-height:16.5px;color:#111;font-weight:normal;transform:scaleX(1.0220);">Rp20.000.000</div>
<div class="t" style="left:36.16px;top:542.12px;font-size:16.5px;line-height:16.5px;color:#111;font-weight:normal;transform:scaleX(1.0400);">Desember</div>
<div class="t" style="left:156.69px;top:542.12px;font-size:16.5px;line-height:16.5px;color:#111;font-weight:normal;transform:scaleX(1.1062);">Putri</div>
<div class="t" style="left:275.70px;top:542.12px;font-size:16.5px;line-height:16.5px;color:#111;font-weight:normal;transform:scaleX(1.0310);">Apple</div>
<div class="t" style="left:357.34px;top:542.12px;font-size:16.5px;line-height:16.5px;color:#111;font-weight:normal;transform:scaleX(0.9625);">11 PRO</div>
<div class="t" style="left:495.20px;top:542.12px;font-size:16.5px;line-height:16.5px;color:#111;font-weight:normal;transform:scaleX(1.0167);">Jakarta</div>
<div class="t" style="left:713.43px;top:542.12px;font-size:16.5px;line-height:16.5px;color:#111;font-weight:normal;transform:scaleX(1.0220);">Rp10.000.000</div>
<div class="r" style="left:32.30px;top:238.20px;width:787.30px;height:320.60px;border:2px solid #2e5e48;"></div>
<div class="r" style="left:820.20px;top:559.40px;width:4.60px;height:4.40px;background:#2e5e48;box-shadow:0 0 0 1px #cfe6da"></div>
</body></html>
